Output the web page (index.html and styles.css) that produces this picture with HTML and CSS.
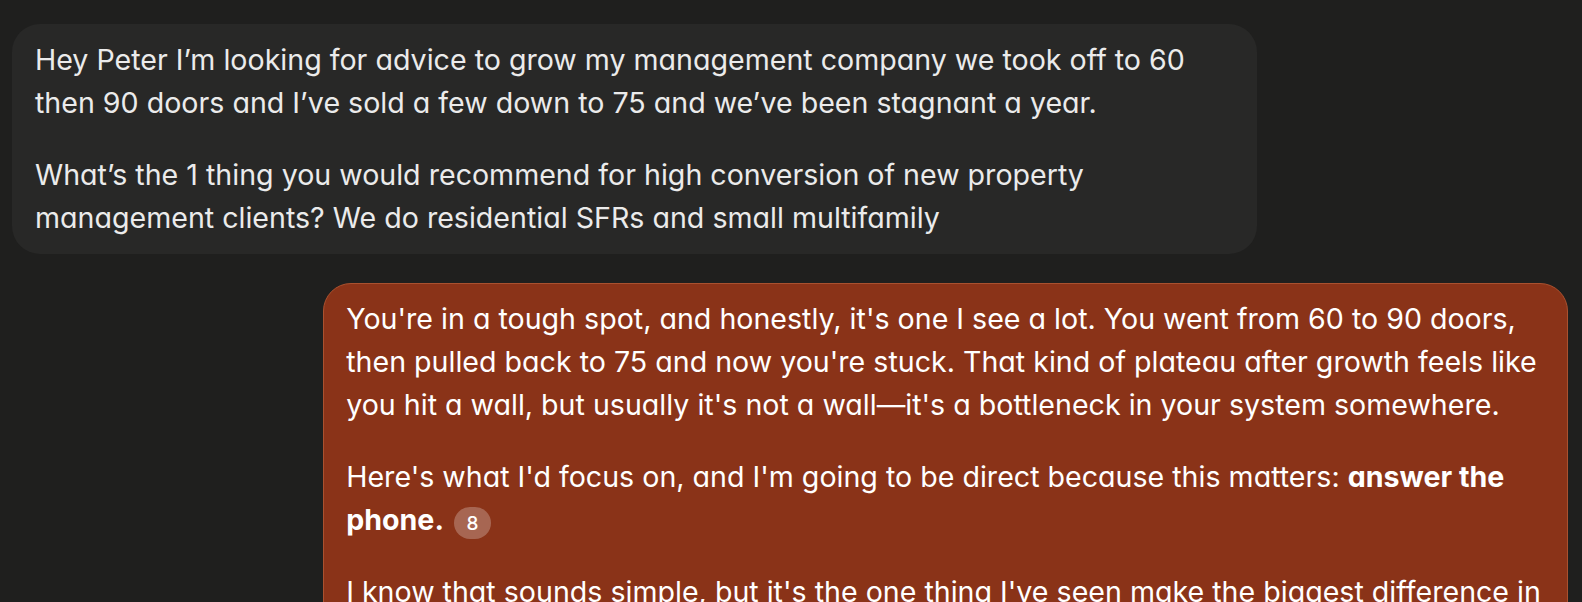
FILE: index.html
```html
<!DOCTYPE html>
<html lang="en">
<head>
<meta charset="utf-8">
<title>Chat</title>
<link rel="stylesheet" href="styles.css">
</head>
<body>
<main class="thread">
  <div class="msg msg-user">
    <div class="bubble bubble-user">
      <p>Hey Peter I’m looking for advice to grow my management company we took off to 60 then 90 doors and I’ve sold a few down to 75 and we’ve been stagnant a year.</p>
      <p>What’s the 1 thing you would recommend for high conversion of new property management clients? We do residential SFRs and small multifamily</p>
    </div>
  </div>
  <div class="msg msg-bot">
    <div class="bubble bubble-bot">
      <p>You're in a tough spot, and honestly, it's one I see a lot. You went from 60 to 90 doors, then pulled back to 75 and now you're stuck. That kind of plateau after growth feels like you hit a wall, but usually it's not a wall—it's a bottleneck in your system somewhere.</p>
      <p>Here's what I'd focus on, and I'm going to be direct because this matters: <strong>answer the phone.</strong> <span class="cite">8</span></p>
      <p>I know that sounds simple, but it's the one thing I've seen make the biggest difference in conversion for property managers at your size.</p>
    </div>
  </div>
</main>
</body>
</html>
```

FILE: styles.css
```css
* { box-sizing: border-box; }

html, body {
  margin: 0;
  background: #1f1f1e;
}

body {
  font-family: Inter, "Noto Sans", "Liberation Sans", sans-serif;
  font-feature-settings: "cv11" 1;
  font-size: 28.6px;
  line-height: 42.6px;
  color: #ececec;
}

.thread {
  display: flex;
  flex-direction: column;
  gap: 29px;
  padding: 24px 14px 24px 12px;
}

.msg {
  display: flex;
}

.msg-user { justify-content: flex-start; }
.msg-bot { justify-content: flex-end; }

.bubble {
  width: 80%;
  padding: 15px 23px 15px;
  border-radius: 28px;
}

.bubble p {
  margin: 0;
}

.bubble p + p {
  margin-top: 30px;
}

.bubble-user {
  background: #282827;
  color: #ebebeb;
}

.bubble-bot {
  background: #8a3318;
  border: 1px solid #a9512f;
  padding: 14px 4px 14px 22px;
  color: #ffffff;
}

.bubble-bot strong {
  font-weight: 700;
}

.cite {
  display: inline-flex;
  align-items: center;
  justify-content: center;
  min-width: 37px;
  height: 32px;
  padding: 0 8px;
  margin-left: 2px;
  border-radius: 16px;
  background: rgba(255, 255, 255, 0.25);
  font-size: 19px;
  line-height: 1;
  font-weight: 500;
  vertical-align: 0;
}
```
